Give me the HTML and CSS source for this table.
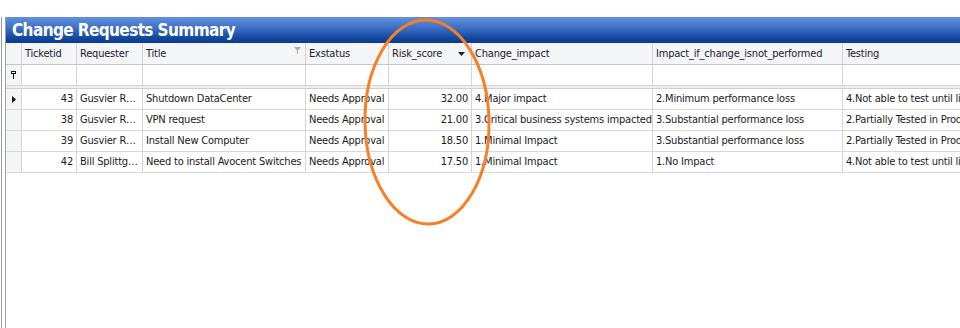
FILE: index.html
```html
<!DOCTYPE html>
<html>
<head>
<meta charset="utf-8">
<link rel="stylesheet" href="styles.css">
</head>
<body>
<div class="page">
  <div class="frame">
    <div class="grid">
      <div class="titlebar">Change Requests Summary</div>
      <div class="row head">
        <div class="c ind"></div>
        <div class="c">Ticketid</div>
        <div class="c">Requester</div>
        <div class="c has-icon">Title<svg class="funnel" width="7" height="7" viewBox="0 0 7 7"><path d="M0 0H7L4 3.5V7H3V3.5Z" fill="#a4b0c4"/></svg></div>
        <div class="c">Exstatus</div>
        <div class="c has-icon">Risk_score<svg class="sort" width="7" height="4" viewBox="0 0 7 4"><path d="M0 0H7L3.5 4Z" fill="#222"/></svg></div>
        <div class="c">Change_impact</div>
        <div class="c">Impact_if_change_isnot_performed</div>
        <div class="c">Testing</div>
      </div>
      <div class="row filter">
        <div class="c ind"><svg width="5" height="8" viewBox="0 0 5 8"><path d="M0 0H5V3H3V8H2V3H0Z" fill="#111"/><rect x="1" y="1" width="3" height="1" fill="#fff"/></svg></div>
        <div class="c"></div><div class="c"></div><div class="c"></div><div class="c"></div><div class="c"></div><div class="c"></div><div class="c"></div><div class="c"></div>
      </div>
      <div class="sep"></div>
      <div class="row data">
        <div class="c ind"><svg width="4" height="7" viewBox="0 0 4 7"><path d="M0 0L4 3.5L0 7Z" fill="#111"/></svg></div>
        <div class="c num">43</div>
        <div class="c">Gusvier R…</div>
        <div class="c">Shutdown DataCenter</div>
        <div class="c">Needs Approval</div>
        <div class="c num">32.00</div>
        <div class="c">4.Major impact</div>
        <div class="c">2.Minimum performance loss</div>
        <div class="c">4.Not able to test until live</div>
      </div>
      <div class="row data">
        <div class="c ind"></div>
        <div class="c num">38</div>
        <div class="c">Gusvier R…</div>
        <div class="c">VPN request</div>
        <div class="c">Needs Approval</div>
        <div class="c num">21.00</div>
        <div class="c">3.Critical business systems impacted</div>
        <div class="c">3.Substantial performance loss</div>
        <div class="c">2.Partially Tested in Production</div>
      </div>
      <div class="row data">
        <div class="c ind"></div>
        <div class="c num">39</div>
        <div class="c">Gusvier R…</div>
        <div class="c">Install New Computer</div>
        <div class="c">Needs Approval</div>
        <div class="c num">18.50</div>
        <div class="c">1.Minimal Impact</div>
        <div class="c">3.Substantial performance loss</div>
        <div class="c">2.Partially Tested in Production</div>
      </div>
      <div class="row data">
        <div class="c ind"></div>
        <div class="c num">42</div>
        <div class="c">Bill Splittg…</div>
        <div class="c">Need to install Avocent Switches</div>
        <div class="c">Needs Approval</div>
        <div class="c num">17.50</div>
        <div class="c">1.Minimal Impact</div>
        <div class="c">1.No Impact</div>
        <div class="c">4.Not able to test until live</div>
      </div>
    </div>
  </div>
  <svg class="circle" width="140" height="214" viewBox="0 0 140 214">
    <ellipse cx="68" cy="105" rx="62" ry="102" fill="none" stroke="#f77f27" stroke-width="3" transform="rotate(-1 68 105)"/>
  </svg>
</div>
</body>
</html>
```
FILE: styles.css
```css
html, body {
  margin: 0;
  padding: 0;
  background: #fff;
}
.page {
  position: relative;
  width: 960px;
  height: 328px;
  overflow: hidden;
  font-family: Tahoma, "DejaVu Sans Condensed", "Liberation Sans", sans-serif;
  font-size: 11px;
  letter-spacing: -0.2px;
  color: #1a1a1a;
}
.frame {
  height: 328px;
  border-left: 1px solid #9a9a9a;
  margin-left: 1px;
  padding-left: 3px;
  box-sizing: border-box;
}
.grid {
  margin-top: 17px;
  height: 311px;
  border-left: 1px solid #a0a0a0;
  box-sizing: border-box;
}
.titlebar {
  height: 26px;
  background: linear-gradient(#6391dc 0%, #3a6cc4 45%, #14489e 80%, #0b3a8e 100%);
  color: #fff;
  font-family: "DejaVu Sans Condensed", "DejaVu Sans", sans-serif;
  font-weight: bold;
  font-size: 17px;
  line-height: 26px;
  padding-left: 6px;
  white-space: nowrap;
  letter-spacing: -0.6px;
}
.row {
  display: grid;
  grid-template-columns: 16px 55px 66px 163px 83px 83px 181px 190px 200px;
  white-space: nowrap;
}
.c {
  box-sizing: border-box;
  border-right: 1px solid #d4d4d4;
  border-bottom: 1px solid #d4d4d4;
  padding: 0 3px;
  overflow: hidden;
  height: 21px;
  line-height: 20px;
}
.head .c {
  background: #f4f5f7;
  border-right-color: #d0d0d8;
  border-bottom-color: #c4c4cc;
  height: 22px;
  line-height: 21px;
  color: #1a2030;
}
.filter .c {
  height: 21px;
}
.ind {
  background: #f4f5f7;
  display: flex;
  align-items: center;
  justify-content: center;
  padding: 0;
}
.data .c {
  border-bottom-color: #d8d8d8;
}
.has-icon {
  position: relative;
}
.funnel {
  position: absolute;
  right: 4px;
  top: 4px;
}
.sort {
  position: absolute;
  right: 6px;
  top: 9px;
}
.num {
  text-align: right;
}
.sep {
  height: 2px;
  background: #eeeeee;
  border-bottom: 1px solid #cfcfcf;
}
.circle {
  position: absolute;
  left: 359px;
  top: 17px;
}
```
